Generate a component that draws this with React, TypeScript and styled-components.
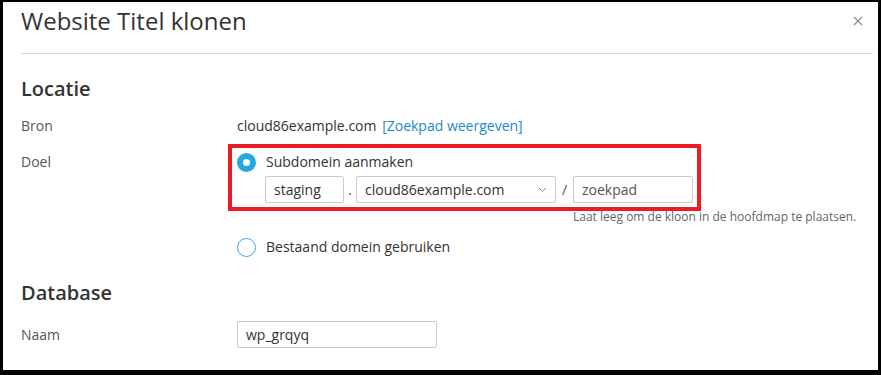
import React from 'react'
import styled, { createGlobalStyle } from 'styled-components'

const GlobalStyle = createGlobalStyle`
  html, body {
    margin: 0;
    padding: 0;
    background: #000;
  }
  body {
    font-family: 'Open Sans', 'Liberation Sans', sans-serif;
    color: #333;
  }
`

const Modal = styled.div`
  margin: 2px 3px 0 3px;
  height: 368px;
  background: #fff;
  overflow: hidden;
`

const Header = styled.div`
  display: flex;
  justify-content: space-between;
  align-items: flex-start;
  margin: 0 5px 0 18px;
  padding-top: 3px;
  box-sizing: border-box;
  height: 52px;
  border-bottom: 1px solid #d6d6de;
`

const Title = styled.h1`
  margin: 0;
  font-size: 24px;
  line-height: 32px;
  font-weight: 400;
  color: #333;
`

const CloseButton = styled.button`
  border: 0;
  background: none;
  padding: 0;
  margin: 11px 10px 0 0;
  width: 10px;
  height: 10px;
  display: flex;
  cursor: pointer;
`

const Body = styled.div`
  padding: 0 18px;
`

const SectionTitle = styled.h2<{ $top: number }>`
  margin: ${({ $top }) => $top}px 0 0;
  font-size: 20px;
  line-height: 28px;
  font-weight: 600;
  color: #333;
`

const Row = styled.div<{ $top: number; $center?: boolean }>`
  display: flex;
  align-items: ${({ $center }) => ($center ? 'center' : 'flex-start')};
  margin-top: ${({ $top }) => $top}px;
`

const Label = styled.div<{ $pad?: number }>`
  width: 216px;
  flex-shrink: 0;
  padding-top: ${({ $pad }) => $pad || 0}px;
  font-size: 14px;
  line-height: 20px;
  color: #555;
`

const Value = styled.div`
  font-size: 14px;
  line-height: 20px;
  color: #333;
`

const Link = styled.a`
  color: #1a8bcb;
  text-decoration: none;
  margin-left: 2px;
`

const Options = styled.div`
  display: flex;
  flex-direction: column;
`

const Highlight = styled.div`
  margin-left: -9px;
  border: 4px solid #ec1c24;
  padding: 4px 4px 4px 5px;
  align-self: flex-start;
`

const RadioLine = styled.label<{ $top?: number }>`
  display: flex;
  align-items: center;
  gap: 10px;
  margin-top: ${({ $top }) => $top || 0}px;
  font-size: 14px;
  line-height: 20px;
  color: #333;
`

const RadioDot = styled.span<{ $checked?: boolean }>`
  width: 19px;
  height: 19px;
  box-sizing: border-box;
  border-radius: 50%;
  flex-shrink: 0;
  border: ${({ $checked }) => ($checked ? '6px solid #27a7df' : '1.5px solid #3aa9e0')};
  background: #fff;
`

const InputRow = styled.div`
  display: flex;
  align-items: center;
  margin: 4px 0 0 28px;
`

const TextBox = styled.div<{ $w: number; $muted?: boolean }>`
  width: ${({ $w }) => $w}px;
  height: 27px;
  box-sizing: border-box;
  border: 1px solid #c9c9c9;
  border-radius: 2px;
  padding: 0 8px;
  display: flex;
  align-items: center;
  justify-content: space-between;
  font-size: 14px;
  color: ${({ $muted }) => ($muted ? '#555' : '#333')};
  background: #fff;
`

const Sep = styled.span<{ $w: number }>`
  width: ${({ $w }) => $w}px;
  text-align: center;
  font-size: 14px;
  color: #555;
`

const Hint = styled.div`
  padding-left: 336px;
  font-size: 12px;
  line-height: 12px;
  color: #666;
`

const Chevron = () => (
  <svg width="9" height="6" viewBox="0 0 9 6">
    <path d="M1 1l3.5 3.5L8 1" fill="none" stroke="#888" strokeWidth="1" />
  </svg>
)

const App = () => {
  return (
    <>
      <GlobalStyle />
      <Modal>
        <Header>
          <Title>Website Titel klonen</Title>
          <CloseButton aria-label="Sluiten">
            <svg width="10" height="10" viewBox="0 0 10 10">
              <path d="M1 1l8 8M9 1l-8 8" stroke="#8a8a8a" strokeWidth="1.1" />
            </svg>
          </CloseButton>
        </Header>
        <Body>
          <SectionTitle $top={21}>Locatie</SectionTitle>
          <Row $top={13}>
            <Label>Bron</Label>
            <Value>
              cloud86example.com <Link href="#">[Zoekpad weergeven]</Link>
            </Value>
          </Row>
          <Row $top={8}>
            <Label $pad={8}>Doel</Label>
            <Options>
              <Highlight>
                <RadioLine>
                  <RadioDot $checked />
                  Subdomein aanmaken
                </RadioLine>
                <InputRow>
                  <TextBox $w={79}>staging</TextBox>
                  <Sep $w={12}>.</Sep>
                  <TextBox $w={200}>
                    cloud86example.com
                    <Chevron />
                  </TextBox>
                  <Sep $w={17}>/</Sep>
                  <TextBox $w={120} $muted>zoekpad</TextBox>
                </InputRow>
              </Highlight>
              <Hint>Laat leeg om de kloon in de hoofdmap te plaatsen.</Hint>
              <RadioLine $top={14}>
                <RadioDot />
                Bestaand domein gebruiken
              </RadioLine>
            </Options>
          </Row>
          <SectionTitle $top={22}>Database</SectionTitle>
          <Row $top={14} $center>
            <Label>Naam</Label>
            <TextBox $w={200}>wp_grqyq</TextBox>
          </Row>
        </Body>
      </Modal>
    </>
  )
}

export default App
